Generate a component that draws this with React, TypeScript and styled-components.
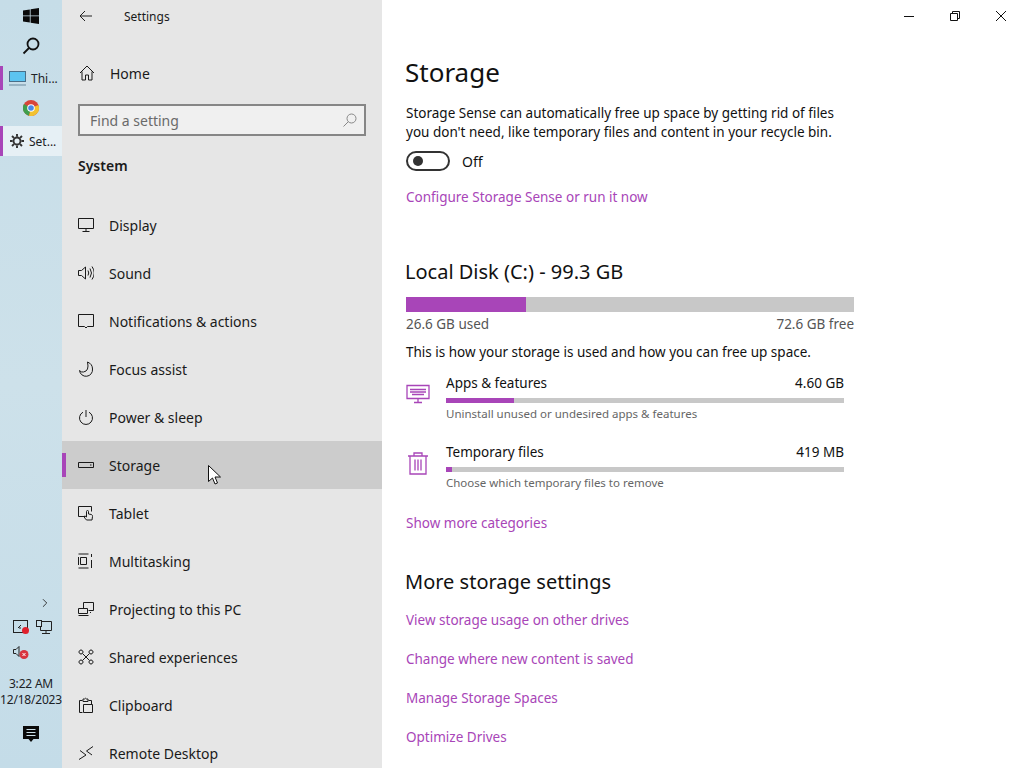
import React from 'react'
import styled, { createGlobalStyle } from 'styled-components'
import { ChevronRight } from 'lucide-react'

const FONT = `"Noto Sans", "Open Sans", "Liberation Sans", sans-serif`
const ACCENT = '#a845b8'

const GlobalStyle = createGlobalStyle`
  html, body {
    margin: 0;
    width: 1024px;
    height: 768px;
    overflow: hidden;
    background: #fff;
    font-family: ${FONT};
  }
  * { box-sizing: border-box; }
`

const Screen = styled.div`
  display: flex;
  position: relative;
  width: 1024px;
  height: 768px;
  overflow: hidden;
`

/* taskbar */
const Taskbar = styled.aside`
  display: flex;
  flex-direction: column;
  flex: 0 0 62px;
  height: 768px;
  background: linear-gradient(180deg, #c6dde8 0%, #cde1ea 50%, #c4dce8 100%);
  color: #1c2226;
`

const TaskIcon = styled.div<{ $h: number }>`
  display: flex;
  align-items: center;
  justify-content: center;
  height: ${(p) => p.$h}px;
`

const TaskApp = styled.div<{ $active?: boolean; $h: number }>`
  display: flex;
  align-items: center;
  gap: 5px;
  height: ${(p) => p.$h}px;
  padding-left: ${(p) => (p.$active ? 7 : 6)}px;
  border-left: 3px solid ${ACCENT};
  font-size: 12px;
  background: ${(p) => (p.$active ? '#e6f0f5' : 'transparent')};
`

const TraySpacer = styled.div`
  flex: 1;
`

const TrayRow = styled.div<{ $left: number; $h: number; $justify?: string }>`
  display: flex;
  align-items: center;
  justify-content: ${(p) => p.$justify ?? 'flex-start'};
  gap: 6px;
  height: ${(p) => p.$h}px;
  padding-left: ${(p) => p.$left}px;
`

const Clock = styled.div`
  display: flex;
  flex-direction: column;
  align-items: center;
  margin-top: 12px;
  font-size: 12px;
  line-height: 16px;
  letter-spacing: -0.2px;
  white-space: nowrap;
`

/* settings nav */
const Nav = styled.nav`
  flex: 0 0 320px;
  height: 768px;
  background: #e6e6e6;
  color: #1a1a1a;
  overflow: hidden;
`

const TitleBar = styled.div`
  display: flex;
  align-items: center;
  height: 32px;
  padding-left: 17px;
  font-size: 12px;
`

const TitleText = styled.span`
  margin-left: 31px;
`

const Home = styled.div`
  display: flex;
  align-items: center;
  height: 48px;
  margin-top: 17px;
  padding-left: 17px;
  gap: 15px;
  font-size: 14px;
`

const SearchBox = styled.div`
  display: flex;
  align-items: center;
  justify-content: space-between;
  width: 288px;
  height: 32px;
  margin: 7px 0 0 16px;
  padding: 0 7px 0 10px;
  border: 2px solid #868686;
  background: #f0f0f0;
  color: #6a6a6a;
  font-size: 14px;
`

const Section = styled.div`
  height: 65px;
  padding: 21px 0 0 16px;
  font-size: 14px;
  font-weight: 600;
  line-height: 18px;
`

const NavRow = styled.div<{ $active?: boolean }>`
  display: flex;
  align-items: center;
  position: relative;
  height: 48px;
  padding-left: 16px;
  gap: 15px;
  font-size: 14px;
  background: ${(p) => (p.$active ? '#cccccc' : 'transparent')};
`

const NavAccent = styled.span`
  position: absolute;
  left: 0;
  top: 12px;
  width: 4px;
  height: 24px;
  background: ${ACCENT};
`

const NavGlyph = styled.svg`
  flex: 0 0 16px;
  width: 16px;
  height: 16px;
  fill: none;
  stroke: #1a1a1a;
  stroke-width: 1;
`

/* main pane */
const Main = styled.main`
  flex: 1;
  height: 768px;
  overflow: hidden;
  color: #111;
`

const WindowBar = styled.div`
  display: flex;
  justify-content: flex-end;
  height: 32px;
`

const WindowButton = styled.div`
  display: flex;
  align-items: center;
  justify-content: center;
  width: 46px;
  height: 32px;
`

const Pane = styled.div`
  display: flex;
  flex-direction: column;
  padding-left: 24px;
  width: 496px;
`

const PageTitle = styled.h1`
  margin: 0 0 0 -1px;
  font-size: 26px;
  font-weight: 400;
  line-height: 36px;
  height: 36px;
  margin-top: 22px;
`

const Para = styled.p`
  margin: 14px 0 0;
  font-size: 13.5px;
  line-height: 19px;
`

const ToggleRow = styled.div`
  display: flex;
  align-items: center;
  gap: 12px;
  height: 20px;
  margin-top: 9px;
  font-size: 14px;
`

const Toggle = styled.span`
  display: flex;
  align-items: center;
  width: 44px;
  height: 20px;
  padding-left: 5px;
  border: 2px solid #333;
  border-radius: 10px;
`

const Knob = styled.span`
  width: 10px;
  height: 10px;
  border-radius: 50%;
  background: #333;
`

const LinkText = styled.a<{ $top: number }>`
  display: block;
  margin-top: ${(p) => p.$top}px;
  color: ${ACCENT};
  font-size: 13.5px;
  line-height: 20px;
`

const DiskTitle = styled.h2<{ $top: number }>`
  margin: ${(p) => p.$top}px 0 0 -1px;
  font-size: 20px;
  font-weight: 400;
  line-height: 28px;
`

const Track = styled.div<{ $h: number; $w: number; $top: number }>`
  width: ${(p) => p.$w}px;
  height: ${(p) => p.$h}px;
  margin-top: ${(p) => p.$top}px;
  background: #c8c8c8;
`

const Fill = styled.div`
  height: 100%;
  background: ${ACCENT};
`

const SpaceRow = styled.div`
  display: flex;
  justify-content: space-between;
  width: 448px;
  margin-top: 2px;
  color: #555;
  font-size: 13.5px;
  line-height: 20px;
`

const Usage = styled.div<{ $top: number }>`
  display: flex;
  margin-top: ${(p) => p.$top}px;
  height: 56px;
`

const UsageIcon = styled.svg`
  flex: 0 0 24px;
  width: 24px;
  height: 24px;
  margin: 9px 16px 0 0;
  fill: none;
  stroke: ${ACCENT};
  stroke-width: 1.3;
`

const UsageBody = styled.div`
  flex: 0 0 398px;
`

const UsageHead = styled.div`
  display: flex;
  justify-content: space-between;
  font-size: 13.5px;
  line-height: 20px;
`

const UsageHint = styled.div`
  margin-top: 3px;
  color: #666;
  font-size: 11.5px;
  line-height: 16px;
`

const Cursor = styled.svg`
  position: absolute;
  left: 208px;
  top: 465px;
  width: 13px;
  height: 20px;
`

const navItems: { label: string; icon: React.ReactNode; active?: boolean }[] = [
  { label: 'Display', icon: <path d="M.5 1.5h15v10H.5zM8 11.5v3M4.5 14.5h7" /> },
  { label: 'Sound', icon: <path d="M.5 5.5h3l4-3.5v12l-4-3.5h-3zM10 5.5q1.5 2.500 0 5M12 3.500q3 4.500 0 9M14 1.500q4.500 6.500 0 13" /> },
  { label: 'Notifications & actions', icon: <path d="M.5 1.500h15v12H9.500L8 15l-1.500-1.500h-6z" /> },
  { label: 'Focus assist', icon: <path d="M9.500 1q5 2 5 7a6.500 6.500 0 0 1-13 1.500q1.500 2 4 1.500 6-1 4-10z" /> },
  { label: 'Power & sleep', icon: <path d="M8 1v7M5 3.200a6.500 6.500 0 1 0 6 0" /> },
  { label: 'Storage', active: true, icon: <path d="M.5 5.500h15v5H.5zM12 8h1.500" /> },
  { label: 'Tablet', icon: <path d="M7 11.500H.5v-10h13v5M8.500 15q-2-2-2.500-3.500l1-.500 1.500 1V6.500a1 1 0 0 1 2 0V9l3 .5q1 .5 1 2l-.500 3.500z" /> },
  { label: 'Multitasking', icon: <path d="M.5 1h10M.5 15h10M2.500 4.500h6v7h-6zM.5 3v0M13.500 1v3M13.500 7v8M.5 4v8" /> },
  { label: 'Projecting to this PC', icon: <path d="M5.500 7V1.500h10v8h-5M.5 7.500h9v5h-9zM.5 14.500h10M12 11.500h1" /> },
  { label: 'Shared experiences', icon: <path d="M4.500 4.500l7 7M11.500 4.500l-7 7M3 1a2 2 0 1 0 .01 0zM13 1a2 2 0 1 0 .01 0zM3 11a2 2 0 1 0 .01 0zM13 11a2 2 0 1 0 .01 0z" /> },
  { label: 'Clipboard', icon: <path d="M4.500 15.500H1.500v-12h3M10.500 3.500h3v4M5 3.500V2h1.500q1-1.500 2 0H10v2.500H5zM5.500 7.500h9v8h-9z" /> },
  { label: 'Remote Desktop', icon: <path d="M1 14.500l7-4.500-6-4.500M15 1.500L8.500 6l5.500 4" /> },
]

const App = () => (
  <Screen>
    <GlobalStyle />
    <Taskbar>
      <TaskIcon $h={32}>
        <svg width="16" height="16" viewBox="0 0 16 16" fill="#0a0a0a">
          <path d="M0 2.400 6.800 1.400v6.100H0zM7.600 1.300 16 0v7.500H7.600zM0 8.300h6.800v6.200L0 13.500zM7.600 8.300H16V16l-8.400-1.300z" />
        </svg>
      </TaskIcon>
      <TaskIcon $h={27}>
        <svg width="18" height="18" viewBox="0 0 18 18" fill="none" stroke="#111" strokeWidth="1.800">
          <circle cx="11" cy="7" r="5.500" />
          <path d="M7 11 1.500 16.500" />
        </svg>
      </TaskIcon>
      <TaskApp $h={24} style={{ marginTop: 7 }}>
        <svg width="17" height="15" viewBox="0 0 17 15">
          <rect x="0.500" y="0.500" width="16" height="10" fill="#5cc4f0" stroke="#4a6f88" />
          <path d="M0 14h17" stroke="#7a98aa" strokeWidth="1.200" />
        </svg>
        Thi...
      </TaskApp>
      <TaskIcon $h={36}>
        <svg width="16" height="16" viewBox="0 0 16 16">
          <circle cx="8" cy="8" r="8" fill="#d8453a" />
          <path d="M8 8 1 4a8 8 0 0 0 5 11.800z" fill="#3f9e4d" />
          <path d="M8 8l7.400-3A8 8 0 0 1 6 15.800z" fill="#f2c230" />
          <circle cx="8" cy="8" r="3.800" fill="#fff" />
          <circle cx="8" cy="8" r="2.800" fill="#4a88e8" />
        </svg>
      </TaskIcon>
      <TaskApp $active $h={30}>
        <svg width="14" height="14" viewBox="0 0 16 16" fill="none" stroke="#333" strokeWidth="2.200">
          <circle cx="8" cy="8" r="4" />
          <path d="M8 0v3M8 13v3M0 8h3M13 8h3M2.300 2.300l2.200 2.200M11.500 11.500l2.200 2.200M13.700 2.300l-2.200 2.200M4.500 11.500l-2.200 2.200" />
        </svg>
        Set...
      </TaskApp>
      <TraySpacer />
      <TrayRow $left={38} $h={22}>
        <ChevronRight size={14} color="#222" strokeWidth={1.500} />
      </TrayRow>
      <TrayRow $left={13} $h={26}>
        <svg width="17" height="16" viewBox="0 0 17 16" fill="none" stroke="#222">
          <rect x="0.500" y="1.500" width="14" height="12" />
          <path d="M5 9l3-3M8 9H6" />
          <circle cx="12.500" cy="11.500" r="3.500" fill="#e0202c" stroke="none" />
        </svg>
        <svg width="16" height="15" viewBox="0 0 16 15" fill="none" stroke="#222">
          <path d="M4.500 1.500h11v9h-11zM10 10.500v3M6 13.500h8" />
          <rect x="0.500" y="0.500" width="5" height="6" fill="#cde1ea" />
        </svg>
      </TrayRow>
      <TrayRow $left={13} $h={24}>
        <svg width="17" height="15" viewBox="0 0 17 15" fill="none" stroke="#222">
          <path d="M.5 4.500h2.500l3-3v10l-3-3H.5z" />
          <circle cx="11" cy="9.500" r="4.500" fill="#d8343f" stroke="none" />
          <path d="M9.500 8l3 3M12.500 8l-3 3" stroke="#fff" />
        </svg>
      </TrayRow>
      <Clock>
        <span>3:22 AM</span>
        <span>12/18/2023</span>
      </Clock>
      <TaskIcon $h={46} style={{ marginTop: 3 }}>
        <svg width="16" height="17" viewBox="0 0 16 17">
          <path d="M0 0h16v13h-5.500L8 16l-2.500-3H0z" fill="#0a0a0a" />
          <path d="M3.500 3.500h9M3.500 6.500h9M3.500 9.500h9" stroke="#cde1ea" />
        </svg>
      </TaskIcon>
      <TaskIcon $h={11} />
    </Taskbar>

    <Nav>
      <TitleBar>
        <svg width="14" height="12" viewBox="0 0 14 12" fill="none" stroke="#222">
          <path d="M13 6H1M6 1 1 6l5 5" />
        </svg>
        <TitleText>Settings</TitleText>
      </TitleBar>
      <Home>
        <NavGlyph viewBox="0 0 16 16">
          <path d="M1 8 8 1l7 7M3 6.500V15h3.500v-5h3v5H13V6.500" />
        </NavGlyph>
        Home
      </Home>
      <SearchBox>
        Find a setting
        <svg width="14" height="14" viewBox="0 0 14 14" fill="none" stroke="#888">
          <circle cx="8.500" cy="5.500" r="4.500" />
          <path d="M5.300 8.700.5 13.500" />
        </svg>
      </SearchBox>
      <Section>System</Section>
      {navItems.map((item) => (
        <NavRow key={item.label} $active={item.active}>
          {item.active && <NavAccent />}
          <NavGlyph viewBox="0 0 16 16">{item.icon}</NavGlyph>
          {item.label}
        </NavRow>
      ))}
    </Nav>

    <Main>
      <WindowBar>
        <WindowButton>
          <svg width="10" height="10" viewBox="0 0 10 10" stroke="#111"><path d="M0 5.500h10" /></svg>
        </WindowButton>
        <WindowButton>
          <svg width="10" height="10" viewBox="0 0 10 10" fill="none" stroke="#111">
            <path d="M.5 2.500h7v7h-7zM2.500 2.500v-2h7v7h-2" />
          </svg>
        </WindowButton>
        <WindowButton>
          <svg width="10" height="10" viewBox="0 0 10 10" stroke="#111"><path d="M0 0l10 10M10 0 0 10" /></svg>
        </WindowButton>
      </WindowBar>
      <Pane>
        <PageTitle>Storage</PageTitle>
        <Para>
          Storage Sense can automatically free up space by getting rid of files
          <br />
          you don't need, like temporary files and content in your recycle bin.
        </Para>
        <ToggleRow>
          <Toggle><Knob /></Toggle>
          Off
        </ToggleRow>
        <LinkText $top={16}>Configure Storage Sense or run it now</LinkText>
        <DiskTitle $top={51}>Local Disk (C:) - 99.3 GB</DiskTitle>
        <Track $w={448} $h={15} $top={11}>
          <Fill style={{ width: '26.8%' }} />
        </Track>
        <SpaceRow>
          <span>26.6 GB used</span>
          <span>72.6 GB free</span>
        </SpaceRow>
        <Para style={{ marginTop: 9 }}>This is how your storage is used and how you can free up space.</Para>
        <Usage $top={11}>
          <UsageIcon viewBox="0 0 24 24">
            <path d="M1 3.500h22v13H1zM12 16.500v4M8 20.500h8M4 7.500h16M4 10h16M6 12.500h12" />
          </UsageIcon>
          <UsageBody>
            <UsageHead><span>Apps &amp; features</span><span>4.60 GB</span></UsageHead>
            <Track $w={398} $h={5} $top={5}><Fill style={{ width: '17.200%' }} /></Track>
            <UsageHint>Uninstall unused or undesired apps &amp; features</UsageHint>
          </UsageBody>
        </Usage>
        <Usage $top={13}>
          <UsageIcon viewBox="0 0 24 24">
            <path d="M2 5h20M8 5V2h8v3M4 5v18h16V5M9 8.500v11M12 8.500v11M15 8.500v11" />
          </UsageIcon>
          <UsageBody>
            <UsageHead><span>Temporary files</span><span>419 MB</span></UsageHead>
            <Track $w={398} $h={5} $top={5}><Fill style={{ width: '1.500%' }} /></Track>
            <UsageHint>Choose which temporary files to remove</UsageHint>
          </UsageBody>
        </Usage>
        <LinkText $top={15}>Show more categories</LinkText>
        <DiskTitle $top={35}>More storage settings</DiskTitle>
        <LinkText $top={14}>View storage usage on other drives</LinkText>
        <LinkText $top={19}>Change where new content is saved</LinkText>
        <LinkText $top={19}>Manage Storage Spaces</LinkText>
        <LinkText $top={19}>Optimize Drives</LinkText>
      </Pane>
    </Main>

    <Cursor viewBox="0 0 13 20">
      <path d="M.5.500v16l4-3.500 2.500 6 2.500-1-2.500-6h5.500z" fill="#fff" stroke="#111" />
    </Cursor>
  </Screen>
)

export default App
